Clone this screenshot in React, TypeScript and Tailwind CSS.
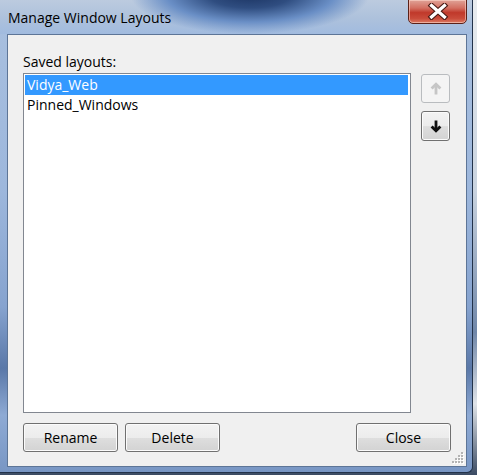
import React from "react";

const font = { fontFamily: '"Open Sans", "Noto Sans", sans-serif' };

function Arrow({ dir, color }: { dir: "up" | "down"; color: string }) {
  return (
    <svg width="12" height="14" viewBox="0 0 12 14" style={{ transform: dir === "up" ? "rotate(180deg)" : undefined }}>
      <path d="M6 1.5 V12" stroke={color} strokeWidth="2.8" fill="none" />
      <path d="M1.6 7.4 L6 11.8 L10.4 7.4" stroke={color} strokeWidth="2.8" fill="none" strokeLinejoin="miter" />
    </svg>
  );
}

function Btn({ children, w }: { children: React.ReactNode; w: string }) {
  return (
    <div
      className={`${w} h-[29px] rounded-[3px] border border-[#707070] bg-[linear-gradient(to_bottom,#f3f3f3_0%,#ececec_50%,#dedede_52%,#d3d3d3_100%)] shadow-[inset_0_0_0_1px_#fbfbfb] flex items-center justify-center text-[14px] leading-[20px] text-black`}
    >
      {children}
    </div>
  );
}

function Grip() {
  const dots: React.ReactNode[] = [];
  for (let i = 0; i < 4; i++) {
    for (let j = 0; j < 4; j++) {
      if (i + j >= 3) {
        dots.push(<rect key={`w${i}${j}`} x={1 + 3 * i + 1} y={1 + 3 * j + 1} width="2" height="2" fill="#ffffff" />);
        dots.push(<rect key={`g${i}${j}`} x={1 + 3 * i} y={1 + 3 * j} width="2" height="2" fill="#b4b4b4" />);
      }
    }
  }
  return (
    <svg width="14" height="14" viewBox="0 0 14 14">
      {dots}
    </svg>
  );
}

export default function App() {
  return (
    <div className="w-[477px] h-[475px] overflow-hidden bg-[linear-gradient(to_bottom,#e9ecef_0%,#c9d3df_40%,#6f86a8_70%,#dfe3e8_85%,#3b4b63_100%)] relative" style={font}>
      <div className="w-[473px] h-[473px] flex flex-col border-r border-b border-[#22324a] rounded-br-[6px] overflow-hidden relative bg-[linear-gradient(to_bottom,#a9c0df_0%,#9db7dc_40%,#86a3cf_65%,#5a78a8_78%,#8eaad4_88%,#7896c4_100%)]">
        {/* title bar */}
        <div className="h-[34px] shrink-0 relative bg-[radial-gradient(ellipse_120px_40px_at_250px_-6px,#1a3260_0%,#2f4d80_35%,#6a8fc6_70%,rgba(150,180,220,0)_100%),linear-gradient(to_bottom,#bccbdf_0%,#adc1dc_55%,#a1bbdf_100%)]">
          <div className="pl-[8px] pt-[8px] text-[14px] leading-[20px] text-black">Manage Window Layouts</div>
          <div className="absolute right-[5px] top-[-1px] w-[59px] h-[25px] rounded-b-[5px] border border-[#5b2118] bg-[linear-gradient(to_bottom,#e0a397_0%,#d36f61_35%,#c0392b_55%,#c94b3a_80%,#dc7a62_100%)] shadow-[inset_0_0_0_1px_rgba(255,220,210,0.55)] flex items-center justify-center">
            <svg width="24" height="17" viewBox="0 0 24 17">
              <path d="M5.5 2.5 L18.5 14 M18.5 2.5 L5.5 14" stroke="#4a1a14" strokeWidth="5.4" strokeLinecap="square" fill="none" />
              <path d="M5.5 2.5 L18.5 14 M18.5 2.5 L5.5 14" stroke="#ffffff" strokeWidth="3.2" strokeLinecap="square" fill="none" />
            </svg>
          </div>
        </div>
        {/* body frame */}
        <div className="flex-1 pl-[7px] pr-[5px] pb-[6px]">
          <div className="w-[460px] h-[433px] border border-[#5d7597] bg-[#f0f0f0] relative flex flex-col px-[15px] pt-[16px] pb-[14px]">
            <div className="h-[22px] text-[14px] leading-[22px] text-black">Saved layouts:</div>
            <div className="flex">
              <div className="w-[388px] h-[340px] border border-[#828790] bg-white p-[1px]">
                <div className="h-[20px] bg-[#3399ff] text-white text-[14px] leading-[20px] pl-[2px] mr-[1px]">Vidya_Web</div>
                <div className="h-[20px] text-black text-[14px] leading-[20px] pl-[2px]">Pinned_Windows</div>
              </div>
              <div className="ml-[10px] flex flex-col gap-[8px] pt-[1px]">
                <div className="w-[29px] h-[29px] rounded-[3px] border border-[#b9bcbf] bg-[#f4f4f4] flex items-center justify-center">
                  <Arrow dir="up" color="#c6c6c6" />
                </div>
                <div className="w-[29px] h-[30px] rounded-[3px] border border-[#707070] bg-[linear-gradient(to_bottom,#f3f3f3_0%,#ececec_50%,#dedede_52%,#d3d3d3_100%)] shadow-[inset_0_0_0_1px_#fbfbfb] flex items-center justify-center">
                  <Arrow dir="down" color="#111111" />
                </div>
              </div>
            </div>
            <div className="flex mt-[10px]">
              <Btn w="w-[95px]">Rename</Btn>
              <div className="ml-[7px]">
                <Btn w="w-[95px]">Delete</Btn>
              </div>
              <div className="ml-auto">
                <Btn w="w-[95px]">Close</Btn>
              </div>
            </div>
            <div className="absolute right-[1px] bottom-[1px]">
              <Grip />
            </div>
          </div>
        </div>
      </div>
    </div>
  );
}
